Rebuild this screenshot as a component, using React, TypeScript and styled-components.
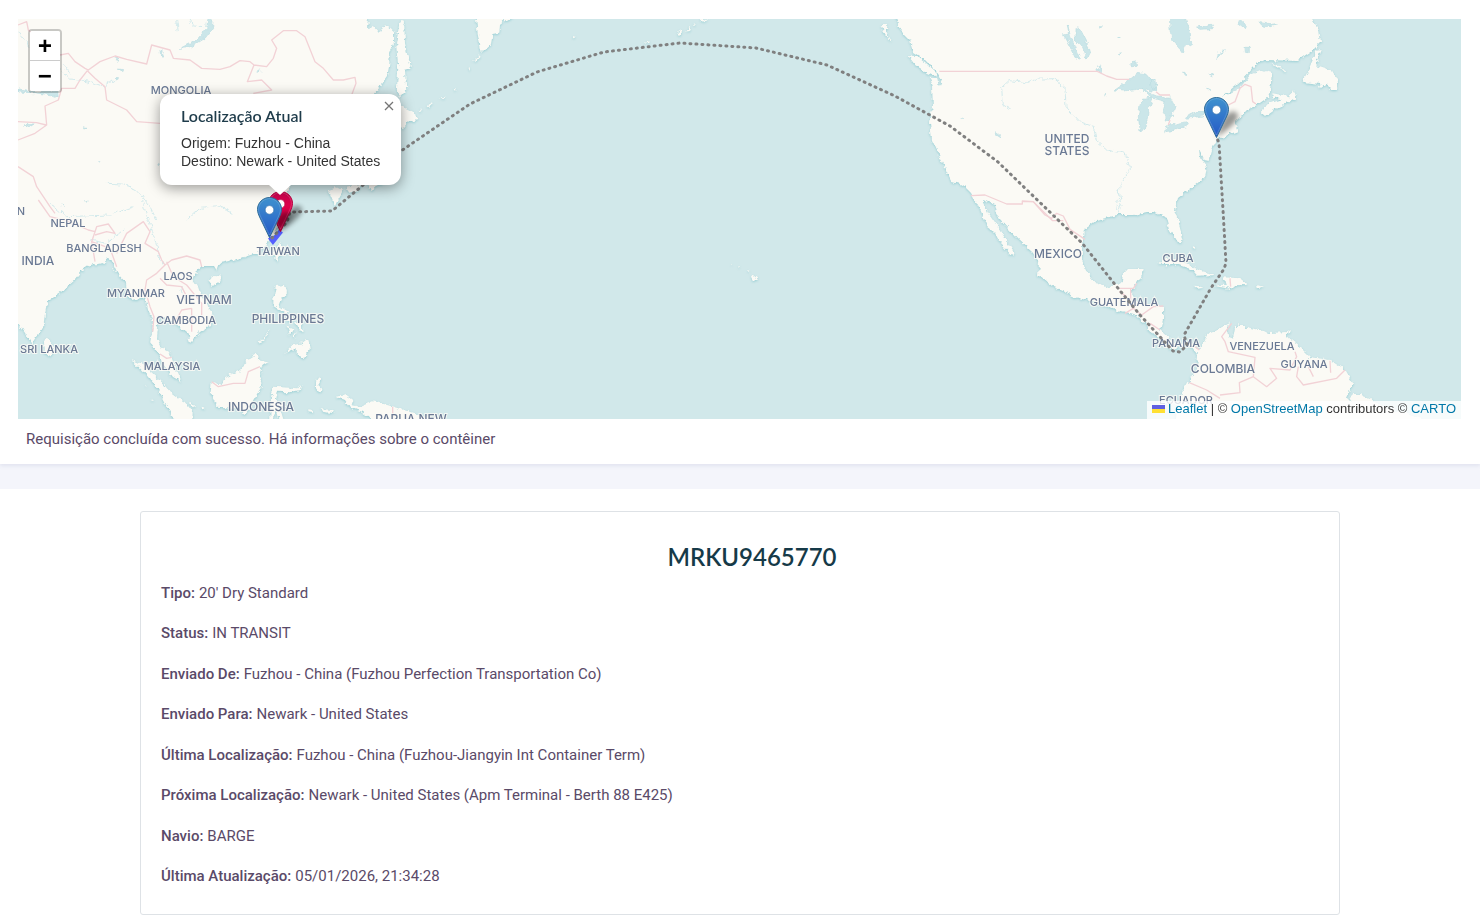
import React from "react";
import styled, { createGlobalStyle } from "styled-components";

const GlobalStyle = createGlobalStyle`
  *, *::before, *::after { box-sizing: border-box; }
  body {
    margin: 0;
    background: #fff;
    color: #5a4a68;
    font-family: "Roboto", sans-serif;
    font-size: 15px;
    line-height: 24px;
  }
`;

const MapSection = styled.section`
  position: relative;
  background: #fff;
  padding: 19px 19px 0 18px;
  box-shadow: 0 2px 4px rgba(90, 110, 160, 0.12);
`;

const MapFrame = styled.div`
  position: relative;
  height: 400px;
  overflow: hidden;
  background: #d1e8ea;
`;

const MapDrawing = styled.svg`
  display: block;
  width: 100%;
  height: 100%;
`;

const ZoomControl = styled.div`
  position: absolute;
  top: 10px;
  left: 10px;
  display: flex;
  flex-direction: column;
  border: 2px solid rgba(0, 0, 0, 0.2);
  border-radius: 4px;
  background-clip: padding-box;
`;

const ZoomButton = styled.button`
  width: 30px;
  height: 30px;
  padding: 4px 0 0;
  border: 0;
  background: #fff;
  color: #000;
  font: bold 24px/26px "Liberation Mono", monospace;
  cursor: pointer;

  &:first-child {
    border-bottom: 1px solid #ccc;
    border-radius: 2px 2px 0 0;
  }
  &:last-child { border-radius: 0 0 2px 2px; }
`;

const Popup = styled.div`
  position: absolute;
  left: 142px;
  top: 75px;
  width: 241px;
  height: 91px;
  padding: 12px 21px;
  border-radius: 12px;
  background: #fff;
  color: #333;
  box-shadow: 0 3px 14px rgba(0, 0, 0, 0.4);
  font: 14px/18px "Liberation Sans", sans-serif;
  white-space: nowrap;

  &::after {
    content: "";
    position: absolute;
    left: 109px;
    top: 91px;
    border: 11px solid transparent;
    border-top: 10px solid #fff;
    border-bottom: 0;
  }
`;

const PopupTitle = styled.h2`
  margin: 0 0 8px;
  color: #1f3c4b;
  font: 600 16px/20px "Lato", sans-serif;
`;

const PopupText = styled.p`
  margin: 0;
`;

const CloseButton = styled.button`
  position: absolute;
  top: 0;
  right: 0;
  width: 24px;
  height: 24px;
  padding: 0;
  border: 0;
  background: transparent;
  color: #757575;
  cursor: pointer;

  svg { display: block; margin: 0 7px; }
`;

const Attribution = styled.div`
  position: absolute;
  right: 0;
  bottom: 0;
  height: 18px;
  padding: 0 5px;
  background: rgba(255, 255, 255, 0.8);
  color: #333;
  font: 13px/16px "Liberation Sans", sans-serif;
  white-space: nowrap;

  a { color: #0078a8; text-decoration: none; }
  svg { margin-right: 3px; }
`;

const StatusMessage = styled.p`
  margin: 0;
  padding: 8px 8px 13px;
`;

const DetailsSection = styled.main`
  margin-top: 25px;
  padding: 22px 140px 5px;
  background: #fff;
`;

const Backdrop = styled.div`
  background: #f4f5fb;
`;

const Card = styled.article`
  padding: 29px 20px 26px;
  border: 1px solid #dee2e6;
  border-radius: 3px;
`;

const CardTitle = styled.h1`
  margin: 0 0 8px;
  padding-left: 24px;
  color: #163a48;
  font: 600 24px/32px "Lato", sans-serif;
  text-align: center;
`;

const DetailList = styled.dl`
  display: flex;
  flex-direction: column;
  justify-content: space-between;
  min-height: 307px;
  margin: 0;
`;

const Detail = styled.div`
  display: flex;
  flex-wrap: wrap;
  gap: 4px;
  dt { font-weight: 500; }
  dd { margin: 0; }
`;

const COAST = [
  // Asia
  "M8 4H368V19L367 28 375 27 380 33 385 24 394 32 394 43 390 53 389 67 387 77 378 90 370 100 345 120 330 150 322 172 300 175 286 178 290 188 286 195 288 208 281 222 273 236 269 242 257 253 238 259 220 263 217 271 214 266 203 266 195 273 192 280 200 292 208 303 212 315 211 325 200 332 190 342 187 333 177 325 167 318 160 317 157 328 156 338 160 347 170 353 175 367 182 382 173 377 165 367 160 357 150 343 152 333 153 323 148 310 145 297 132 300 127 295 126 283 117 273 110 258 103 263 90 265 83 270 75 280 60 293 47 302 45 315 43 327 37 337 32 345 25 333 18 323 8 310Z",
  // North America, Central America and South America
  "M890 4 896 19 900 30 910 40 913 52 925 60 935 70 942 80 939 87 937 78 929 78 932 87 933 107 930 122 932 140 940 157 945 168 952 182 963 185 971 193 980 210 987 227 995 233 1000 243 1013 257 1015 253 1005 238 997 225 988 212 983 200 995 205 998 217 1017 238 1033 253 1039 263 1038 275 1053 287 1075 297 1093 302 1117 311 1138 316 1148 328 1153 335 1167 342 1173 350 1182 345 1190 345 1198 355 1197 368 1189 382 1182 393 1177 409 1175 430H1422L1422 419 1387 408 1370 398 1360 394 1350 402 1346 398 1353 383 1345 370 1330 360 1310 357 1300 347 1287 337 1287 332 1270 333 1247 327 1235 327 1233 339 1228 337 1227 327 1232 322 1220 328 1208 333 1203 343 1200 350 1192 342 1177 345 1173 342 1160 330 1163 320 1163 307 1150 305 1137 302 1132 293 1135 285 1140 278 1143 268 1128 268 1123 273 1122 282 1107 287 1097 284 1087 272 1082 260 1082 247 1084 230 1097 220 1117 215 1133 215 1147 212 1153 212 1167 218 1170 230 1178 243 1182 240 1180 227 1175 210 1178 198 1193 187 1205 177 1207 167 1200 157 1199 150 1204 160 1209 161 1212 150 1217 139 1225 136 1238 131 1235 122 1247 110 1257 105 1267 98 1270 92 1272 73 1263 70 1250 75 1240 88 1222 97 1242 80 1258 63 1265 60 1297 61 1313 50 1321 42 1319 28 1310 19 1306 4Z",
];

const ISLANDS_ASIA =
  "M140 415 165 445 155 470 135 460 132 430ZM625 240 645 228 662 230 655 250 638 258ZM845 130 848 150 832 185 820 165 825 145ZM828 258 852 255 858 280 845 300 838 318 870 338 850 335 820 315 820 290ZM775 430 812 390 808 398 780 430ZM925 415 930 450 910 478 890 465 890 445 855 460 880 435 905 430ZM858 345 880 350 875 362 862 360ZM885 365 905 370 908 400 895 385ZM862 380 880 385 870 405ZM890 395 885 415 880 410ZM770 460 775 480 803 488 785 500 780 520 785 560 760 600 735 645 720 625 650 620 632 580 635 545 665 555 675 535 720 510 740 480ZM395 480 430 495 480 540 510 575 555 610 578 640 576 690H540L500 620 470 560 430 515ZM820 560 895 565 905 548 900 570 870 577 830 575 825 600 860 620 840 625 850 657 835 657 825 625 820 690 810 690 812 600ZM948 545 955 535 965 538 955 555 968 568 955 575 948 565ZM925 628 940 630 938 636 925 634ZM965 628 1000 630 1005 640 970 636ZM1010 590 1040 585 1060 600 1055 615 1080 620 1120 603 1180 620 1260 645 1330 657V690H1115V657L1085 635 1050 622 1035 600ZM435 555 442 562 437 562ZM452 595 462 602 455 602ZM570 605 585 620 575 625ZM605 620 618 624 606 628Z";

const ISLANDS_JAPAN =
  "M985 570 1010 562 1030 572 1015 600 1008 615 998 600ZM1035 565 1065 558 1085 555 1075 570 1045 578ZM1090 530 1150 500 1190 460 1190 530 1110 570ZM1198 70 1206 62 1213 75 1215 130 1233 205 1215 210 1219 270 1212 280 1200 292 1190 275 1195 200 1188 130 1195 90ZM1190 310 1203 318 1245 340 1250 357 1230 362 1212 385 1190 375Z";

const ISLANDS_PACIFIC =
  "M288 20V57L293 100 305 160 332 135 338 102 358 98 360 75 378 60 395 50V20ZM280 182 298 165 298 172 285 186ZM140 318 158 307 155 313 143 322ZM180 296 197 288 190 297ZM120 328 128 330 115 334ZM270 200 274 206 269 207ZM220 268 228 264 224 272ZM892 100 908 90 905 98 896 106ZM918 88 932 80 932 88 920 95ZM945 72 940 78 938 74ZM962 60 985 55 968 68ZM576 104 588 108 580 112ZM795 128 803 124 802 130ZM1113 824 1120 826 1131 835 1118 847ZM1100 810 1108 812 1107 816ZM1074 799 1080 801 1077 804ZM1048 789 1054 791 1051 794Z";

const ISLANDS_AMERICA_WEST =
  "M145 138 175 142 225 185 230 200 205 190 165 165ZM65 45 82 45 80 70 95 97 75 75Z";

const ISLANDS_AMERICA_EAST =
  "M335 310 345 318 370 300 415 278 440 265 432 240 420 262 395 255 368 250 362 262 395 268 350 285ZM512 120 500 122 475 180 455 215 510 222 512 235 530 222 545 240 562 240 560 205 545 180 515 170 495 165ZM365 162 385 165 408 180 385 178ZM198 380 225 379 205 388Z";

const ISLANDS_CARIBBEAN =
  "M55 218 75 205 130 212 175 240 228 255 175 257 160 240 100 220ZM220 287 258 288 250 262 300 265 325 285 285 286 272 297ZM158 287 175 288 190 293 170 297ZM348 286 372 290 350 295ZM158 168 166 172 163 178ZM295 402 302 404 296 408ZM445 423 453 428 446 432ZM76 224 84 226 78 231ZM640 612 665 612 655 632 630 630Z";

const LAKES_ASIA =
  "M625 40 640 40 638 85 615 115 570 143 540 145 590 120 620 85ZM483 150 490 155 485 172ZM345 172 358 173 355 187ZM355 207 370 210 360 212ZM340 242 350 232 352 237ZM768 215 782 205 778 218ZM54 270 110 276 170 272 172 292 155 285 100 278 54 276ZM70 375 104 371 90 380ZM250 383 261 385 252 388ZM472 490 480 493 475 500ZM185 615 193 622 187 620ZM255 602 265 606 256 606ZM293 482 299 485 294 486Z";

const LAKES_AMERICA_WEST =
  "M765 240 805 212 835 188 860 192 888 225 890 245 860 240 830 238 790 243ZM850 268 880 262 865 300 858 355 840 360 835 320 840 285ZM645 52 660 56 680 95 690 130 682 145 668 112 645 90ZM622 45 632 80 660 148 650 145 630 108 612 75 626 72ZM815 155 828 153 830 170 817 170ZM405 365 422 377 418 382ZM710 175 725 165 724 185 712 185ZM775 130 787 128 782 133ZM735 250 740 254 735 256ZM715 50 730 50 722 54ZM303 322 308 325 303 326ZM775 78 778 85 773 82Z";

const LAKES_AMERICA_EAST =
  "M58 10 105 10 110 40 120 60 125 100 105 112 100 130 65 88 60 60ZM-25 235 0 250 20 258 60 262 75 290 60 330 48 332 40 308 45 275 0 262ZM40 360 60 345 110 335 115 345 80 360 45 365ZM105 320 150 305 165 305 160 318 110 325ZM0 210 15 213 20 238 5 232ZM140 52 188 42 185 56 150 58ZM200 150 205 132 220 122 208 138ZM330 35 350 38 360 47 384 44 360 50 340 48ZM262 38 285 55 290 45 275 30ZM285 112 298 112 298 128 286 127ZM98 186 112 192 103 196ZM175 196 195 192 188 200ZM170 235 180 240 175 242Z";

const BORDERS: Array<[number, number, string]> = [
  [0, 0, "M54 75 80 65 85 90 110 112 150 130 180 165 205 160 225 185 255 205 265 210 300 185 345 168 380 178 440 192 455 135 510 150 520 175 570 180 605 205 660 208 690 200 720 182 750 185 762 195 800 200 820 175 830 145 815 120 850 92 890 92 915 110 945 185 970 205 1000 240 1030 240 1065 232 1068 250 1055 285M762 195 742 245 785 240 815 270 760 280M262 212 285 235 315 260 320 300 380 330 410 365 480 370M262 212 240 240 225 265 185 265 175 300 135 318 140 375 105 400 54 420M54 365 110 368 138 375M54 500 100 530 110 560 130 590 150 620 165 640"],
  [0, 200, "M115 0 150 50 200 62 265 90 285 95 290 80 325 72 345 100 320 95 285 105M285 95 275 125 285 185M275 125 330 145 350 200M350 160 380 100 430 65 450 95 435 130 475 155 485 180 495 195 470 220 440 240 435 270 450 320 462 350 458 395M495 195 515 180 560 168 600 180 605 200M500 185 520 230 560 255 605 310 605 345M480 235 500 255 545 260 560 290M520 375 545 330 575 325M575 325 575 395M480 462 500 475 515 472M635 545 655 560 700 550 735 550 745 515 780 500M1178 620 1178 657"],
  [860, 10, "M238 184H712L740 198 770 208 808 208M888 245 900 255 930 255M333 557 375 555 440 582 487 582 487 573 520 575 545 600 578 632 610 632"],
  [1150, 10, "M235 285 255 275 270 235 285 223 303 230 308 275 318 282M55 345 60 330"],
  [920, 190, "M310 35 340 35 375 75 395 85 410 70 430 78 450 118 495 148M595 295 640 295 650 280M632 295 632 330M598 305 620 320M615 370 640 355 665 375 700 350 730 348M690 400 720 420"],
  [1140, 190, "M275 400 245 440 255 455 265 485 345 502 340 560 298 578 300 608 240 615M148 578 200 600 240 625M340 560 380 590 410 565 390 535 450 540 470 500 465 485M475 530 470 560 490 585 590 565 615 540M570 512 572 548M505 530 520 560M270 265 272 290M165 470 178 480"],
];

const RIVERS: Array<[number, number, string]> = [
  [0, 0, "M54 95 90 140M180 205 210 240 260 245 310 262 340 240M190 190 210 225M565 57 580 78 610 80M530 60 535 95M320 550 370 552 420 580 450 620 470 660M560 660 600 625 660 620 700 640"],
  [0, 200, "M150 10 200 50 330 45 400 20M425 0 445 60 465 120 485 190M270 120 320 130 370 90M545 260 555 300"],
  [860, 10, "M450 298 430 285 425 235 450 212 500 218 520 208 580 206 615 235 618 290 660 335 700 350 710 395 740 420 795 430 812 470 780 530 770 600"],
  [920, 190, "M597 0 605 40 595 70"],
];

const LABELS: Array<[string, number, number, number]> = [
  ["MONGOLIA", 181, 94, 11],
  ["NEPAL", 68, 227, 11],
  ["BANGLADESH", 104, 252, 11],
  ["INDIA", 38, 265, 12],
  ["N", 21, 215, 11],
  ["LAOS", 178, 280, 11],
  ["MYANMAR", 136, 297, 11],
  ["VIETNAM", 204, 304, 12],
  ["CAMBODIA", 186, 324, 11],
  ["PHILIPPINES", 288, 323, 12],
  ["TAIWAN", 278, 255, 11],
  ["SRI LANKA", 49, 353, 11],
  ["MALAYSIA", 172, 370, 11],
  ["INDONESIA", 261, 411, 12],
  ["PAPUA NEW", 411, 423, 12],
  ["UNITED", 1067, 143, 12],
  ["STATES", 1067, 155, 12],
  ["MEXICO", 1058, 258, 12],
  ["CUBA", 1178, 262, 11],
  ["GUATEMALA", 1124, 306, 11],
  ["PANAMA", 1176, 347, 11],
  ["VENEZUELA", 1262, 350, 11],
  ["COLOMBIA", 1223, 373, 12],
  ["GUYANA", 1304, 368, 11],
  ["ECUADOR", 1186, 404, 11],
];

const ROUTE =
  "M272 238 287 222 290 212 332 211 362 186 401 151 420 138 470 104 537 72 604 52 680 43 756 48 827 65 895 96 950 126 998 162 1027 190 1082 243 1117 287 1140 315 1173 351 1180 352 1187 345 1184 335 1211 288 1224 269 1226 263 1223 210 1219 143 1217 138";

const third = "scale(.33333)";

function Land({ d, x, y }: { d: string; x: number; y: number }) {
  return <path d={d} transform={`translate(${x} ${y}) ${third}`} />;
}

function Pin({ x, y, tone }: { x: number; y: number; tone: "blue" | "red" }) {
  return (
    <g transform={`translate(${x} ${y})`}>
      <path d="M12 40 20 20Q30 10 34 18 34 27 12 40Z" fill="#000" opacity=".4" filter="url(#soft)" />
      <path
        d="M12.5 .5C5.9 .5 .5 5.9 .5 12.4c0 3 1.300 5.900 2.600 8.600L12.500 40.500 21.900 21c1.300-2.700 2.600-5.600 2.600-8.600C24.500 5.900 19.100 .5 12.500 .5Z"
        fill={`url(#${tone})`}
        stroke={tone === "blue" ? "#2e6c97" : "#b8003f"}
      />
      <path
        d="M12.500 1.600C6.500 1.600 1.600 6.500 1.600 12.400c0 2.800 1.200 5.500 2.500 8.200L12.500 38l8.400-17.400c1.300-2.700 2.500-5.400 2.500-8.200C23.400 6.500 18.500 1.600 12.500 1.600Z"
        fill="none"
        stroke="#fff"
        strokeOpacity=".16"
      />
      <circle cx="12.500" cy="12.900" r="4.300" fill="#fff" stroke={tone === "blue" ? "#2e6ca7" : "#b8003f"} strokeOpacity=".6" />
    </g>
  );
}

function WorldMap() {
  return (
    <MapDrawing viewBox="18 19 1443 400" preserveAspectRatio="xMinYMin slice" role="img" aria-label="Mapa da rota">
      <defs>
        <linearGradient id="blue" x1="0" y1="0" x2="0" y2="1">
          <stop offset="0" stopColor="#3f92cf" />
          <stop offset="1" stopColor="#2458c6" />
        </linearGradient>
        <linearGradient id="red" x1="0" y1="0" x2="0" y2="1">
          <stop offset="0" stopColor="#c8054f" />
          <stop offset=".5" stopColor="#e3004b" />
          <stop offset="1" stopColor="#e3004b" />
        </linearGradient>
        <filter id="soft" x="-50%" y="-50%" width="200%" height="200%">
          <feGaussianBlur stdDeviation="2.500" />
        </filter>
        <filter id="rough" filterUnits="userSpaceOnUse" x="0" y="0" width="1480" height="440" colorInterpolationFilters="sRGB">
          <feTurbulence type="fractalNoise" baseFrequency=".18" numOctaves="3" seed="4" result="noise" />
          <feDisplacementMap in="SourceGraphic" in2="noise" scale="6" xChannelSelector="R" yChannelSelector="G" result="coast" />
          <feDropShadow in="coast" dx="0" dy="1" stdDeviation="1" floodColor="#8cc9d0" floodOpacity=".8" />
        </filter>
        <filter id="wavy" filterUnits="userSpaceOnUse" x="0" y="0" width="1480" height="440" colorInterpolationFilters="sRGB">
          <feTurbulence type="fractalNoise" baseFrequency=".18" numOctaves="3" seed="4" result="noise" />
          <feDisplacementMap in="SourceGraphic" in2="noise" scale="6" xChannelSelector="R" yChannelSelector="G" />
        </filter>
      </defs>
      <g fill="#fbfaf5" filter="url(#rough)">
        {COAST.map((d) => (
          <path key={d} d={d} />
        ))}
        <Land d={ISLANDS_ASIA} x={0} y={200} />
        <Land d={ISLANDS_JAPAN} x={0} y={0} />
        <Land d={ISLANDS_PACIFIC} x={380} y={0} />
        <Land d={ISLANDS_AMERICA_WEST} x={860} y={10} />
        <Land d={ISLANDS_AMERICA_EAST} x={1150} y={10} />
        <Land d={ISLANDS_CARIBBEAN} x={1140} y={190} />
      </g>
      <g fill="#cbe6e9" stroke="#b9dde1" strokeWidth="2" filter="url(#wavy)">
        <Land d={LAKES_ASIA} x={0} y={0} />
        <Land d={LAKES_AMERICA_WEST} x={860} y={10} />
        <Land d={LAKES_AMERICA_EAST} x={1150} y={10} />
      </g>
      <g fill="none" stroke="#d3eaec" strokeWidth="3" filter="url(#wavy)">
        {RIVERS.map(([x, y, d]) => (
          <Land key={d} d={d} x={x} y={y} />
        ))}
      </g>
      <g fill="none" stroke="#f2d2d6" strokeWidth="4" strokeLinejoin="round">
        {BORDERS.map(([x, y, d]) => (
          <Land key={d} d={d} x={x} y={y} />
        ))}
      </g>
      <g
        fill="#6a7994"
        stroke="#fbfaf5"
        strokeWidth="2"
        strokeOpacity=".8"
        paintOrder="stroke"
        textAnchor="middle"
        fontFamily="Inter, sans-serif"
        fontWeight="500"
      >
        {LABELS.map(([name, x, y, size]) => (
          <text key={name} x={x} y={y} fontSize={size}>
            {name}
          </text>
        ))}
      </g>
      <path d="M270 237 273 241 281 231" fill="none" stroke="#5560ff" strokeWidth="5" />
      <path d={ROUTE} fill="none" stroke="#808080" strokeWidth="3" strokeDasharray="1 5" strokeLinecap="round" strokeLinejoin="round" />
      <Pin x={268} y={191} tone="red" />
      <Pin x={257} y={197} tone="blue" />
      <Pin x={1204} y={97} tone="blue" />
    </MapDrawing>
  );
}

const DETAILS: Array<[string, string]> = [
  ["Tipo:", "20' Dry Standard"],
  ["Status:", "IN TRANSIT"],
  ["Enviado De:", "Fuzhou - China (Fuzhou Perfection Transportation Co)"],
  ["Enviado Para:", "Newark - United States"],
  ["Última Localização:", "Fuzhou - China (Fuzhou-Jiangyin Int Container Term)"],
  ["Próxima Localização:", "Newark - United States (Apm Terminal - Berth 88 E425)"],
  ["Navio:", "BARGE"],
  ["Última Atualização:", "05/01/2026, 21:34:28"],
];

export default function App() {
  return (
    <Backdrop>
      <GlobalStyle />
      <MapSection>
        <MapFrame>
          <WorldMap />
          <ZoomControl>
            <ZoomButton type="button" aria-label="Aproximar">+</ZoomButton>
            <ZoomButton type="button" aria-label="Afastar">−</ZoomButton>
          </ZoomControl>
          <Popup>
            <PopupTitle>Localização Atual</PopupTitle>
            <PopupText>Origem: Fuzhou - China</PopupText>
            <PopupText>Destino: Newark - United States</PopupText>
            <CloseButton type="button" aria-label="Fechar">
              <svg width="10" height="10" viewBox="0 0 10 10" stroke="currentColor" strokeWidth="1.300">
                <path d="M1 1 9 9M9 1 1 9" />
              </svg>
            </CloseButton>
          </Popup>
          <Attribution>
            <a href="#leaflet">
              <svg width="13" height="8" viewBox="0 0 13 8" aria-hidden="true">
                <path fill="#6060e0" d="M0 0H13V4H0Z" />
                <path fill="#ffe033" d="M0 4H13V8H0Z" />
              </svg>
              Leaflet
            </a>{" "}
            | © <a href="#osm">OpenStreetMap</a> contributors © <a href="#carto">CARTO</a>
          </Attribution>
        </MapFrame>
        <StatusMessage>Requisição concluída com sucesso. Há informações sobre o contêiner</StatusMessage>
      </MapSection>
      <DetailsSection>
        <Card>
          <CardTitle>MRKU9465770</CardTitle>
          <DetailList>
            {DETAILS.map(([label, value]) => (
              <Detail key={label}>
                <dt>{label}</dt>
                <dd>{value}</dd>
              </Detail>
            ))}
          </DetailList>
        </Card>
      </DetailsSection>
    </Backdrop>
  );
}
